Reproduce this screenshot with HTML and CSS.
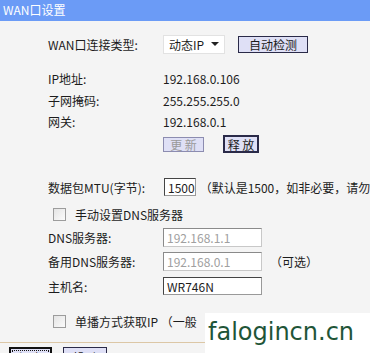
FILE: index.html
```html
<!doctype html>
<html>

<head>
    <meta charset="UTF-8">
    <title>WAN口设置</title>
    <link rel="stylesheet" href="styles.css">
</head>

<body>
    <div class="title">WAN口设置</div>

    <div class="form">
        <div class="row r-type">
            <span class="label">WAN口连接类型:</span>
            <div class="select">动态IP<span class="arrow"></span></div>
            <button class="btn btn-detect">自动检测</button>
        </div>
        <div class="row r-info r-first"><span class="label">IP地址:</span><span>192.168.0.106</span></div>
        <div class="row r-info"><span class="label">子网掩码:</span><span>255.255.255.0</span></div>
        <div class="row r-info r-last"><span class="label">网关:</span><span>192.168.0.1</span></div>
        <div class="row r-actions">
            <span class="label"></span>
            <button class="btn btn-renew" disabled>更 新</button>
            <button class="btn btn-release">释 放</button>
        </div>

        <div class="row r-mtu">
            <span class="label">数据包MTU(字节):</span>
            <div class="input input-mtu">1500</div>
            <span class="hint">（默认是1500，如非必要，请勿</span>
        </div>

        <div class="check r-dns-check"><span class="box"></span>手动设置DNS服务器</div>
        <div class="row r-field r-dns"><span class="label">DNS服务器:</span><div class="input input-off">192.168.1.1</div></div>
        <div class="row r-field r-dns2"><span class="label">备用DNS服务器:</span><div class="input input-off">192.168.0.1</div><span class="opt">（可选）</span></div>
        <div class="row r-field r-host"><span class="label">主机名:</span><div class="input input-host">WR746N</div></div>

        <div class="check r-unicast"><span class="box"></span>单播方式获取IP （一般</div>
    </div>

    <div class="footer">
        <button class="btn btn-save">保 存</button>
        <button class="btn btn-help">帮 助</button>
    </div>

    <!-- 右下角水印 -->
    <div class="mark">falogincn.cn</div>
</body>

</html>
```

FILE: styles.css
```css
html {
    --bg: #f4f4f4;
    --head: #6b9bf6;
    --btn-bg: #dfe0f6;
    --btn-border: #2a2a48;
}
body {
    margin: 0;
    width: 370px;
    height: 353px;
    overflow: hidden;
    position: relative;
    background-color: var(--bg);
    font-family: "Noto Sans CJK SC", "Liberation Sans", sans-serif;
    font-size: 12px;
    color: #1c1c1c;
}
.title {
    height: 21px;
    line-height: 20px;
    padding-left: 3px;
    background-color: var(--head);
    color: #fff;
}

.form {
    padding-top: 13px;
    padding-left: 48px;
}
.row {
    display: flex;
    align-items: center;
    white-space: nowrap;
}
.label {
    width: 115px;
    flex-shrink: 0;
}

.r-type { height: 20px; }
.select {
    display: flex;
    align-items: center;
    box-sizing: border-box;
    width: 62px;
    height: 19px;
    padding-left: 5px;
    background-color: #fff;
    border: 1px solid #e2e2e2;
}
.select .arrow {
    margin-left: auto;
    margin-right: 5px;
    border-left: 4px solid transparent;
    border-right: 4px solid transparent;
    border-top: 4px solid #222;
}

.btn {
    display: flex;
    align-items: center;
    justify-content: center;
    box-sizing: border-box;
    padding: 0;
    font-family: inherit;
    font-size: 12px;
    color: #1c1c1c;
    background-color: var(--btn-bg);
    border: 1px solid var(--btn-border);
}
.btn-detect {
    width: 70px;
    height: 17px;
    margin-left: 13px;
}

.r-first { margin-top: 13px; }
.r-info { height: 22px; }
.r-last { height: 21px; }

.r-actions {
    height: 18px;
    margin-top: 3px;
}
.btn-renew {
    width: 41px;
    height: 15px;
    color: #9a9a9a;
    border-color: #8c8cb0;
}
.btn-release {
    width: 36px;
    height: 18px;
    margin-left: 19px;
    border: 2px solid var(--btn-border);
}

.input {
    display: flex;
    align-items: center;
    box-sizing: border-box;
    height: 19px;
    padding-left: 3px;
    background-color: #fff;
    border: 1px solid #444;
    border-right-color: #999;
    border-bottom-color: #999;
}
.r-mtu {
    height: 18px;
    margin-top: 25px;
}
.input-mtu {
    width: 41px;
    height: 18px;
    margin-left: 1px;
}
.hint { margin-left: 4px; }

.check {
    display: flex;
    align-items: center;
    height: 14px;
    margin-left: 5px;
    white-space: nowrap;
}
.check .box {
    box-sizing: border-box;
    width: 13px;
    height: 13px;
    margin-right: 9px;
    border: 1px solid #9c9c9c;
    background: linear-gradient(135deg, #e4e4e4, #fbfbfb);
}
.r-dns-check { margin-top: 11px; }

.r-field { height: 19px; }
.r-field .input { width: 99px; }
.r-dns { margin-top: 7px; }
.r-dns2 { margin-top: 5px; }
.r-host {
    height: 18px;
    margin-top: 6px;
}
.input-off {
    color: #a0a0a0;
    border-color: #8a8a8a #c8c8c8 #c8c8c8 #8a8a8a;
}
.input-host { height: 18px; }
.opt { margin-left: 8px; }

.r-unicast { margin-top: 19px; }

.footer {
    display: flex;
    gap: 11px;
    margin-top: 14px;
    padding: 4px 0 0 9px;
    border-top: 1px solid #dcc7a6;
}
.btn-save {
    width: 43px;
    height: 20px;
    border: 2px solid #111;
    outline: 1px dotted #111;
    outline-offset: -4px;
}
.btn-help {
    width: 44px;
    height: 20px;
}

.mark {
    position: absolute;
    left: 205px;
    top: 313px;
    width: 165px;
    height: 40px;
    padding-left: 3px;
    box-sizing: border-box;
    background-color: #fff;
    font-family: "DejaVu Sans", sans-serif;
    font-size: 24px;
    line-height: 38px;
    color: #1f5538;
}
```
